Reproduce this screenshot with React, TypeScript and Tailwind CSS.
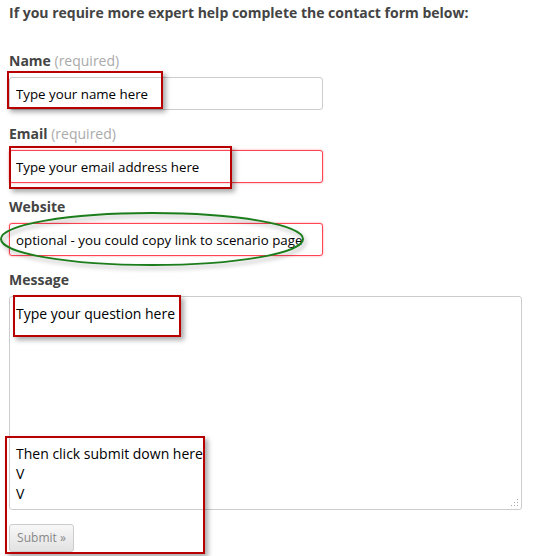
import React from "react";

const fieldBase =
  "block w-[314px] h-[33px] rounded-[3px] border bg-white px-[6px] text-[13.3px] text-black outline-none";

const Label = ({ text, required }: { text: string; required?: boolean }) => (
  <div className="text-[14px] leading-5 font-bold text-[#444]">
    {text}
    {required && <span className="font-normal text-[#aaa]"> (required)</span>}
  </div>
);

const Box = ({ className }: { className: string }) => (
  <div
    className={`absolute border-2 border-[#b80000] shadow-[3px_3px_5px_rgba(0,0,0,0.35)] pointer-events-none ${className}`}
  />
);

export default function App() {
  const message =
    "Type your question here\n\n\n\n\n\n\nThen click submit down here\nV\nV";

  return (
    <div
      className="relative w-[536px] h-[556px] bg-white pl-[9px] pt-[3px]"
      style={{ fontFamily: '"Open Sans", "Liberation Sans", sans-serif' }}
    >
      <p className="text-[14px] leading-5 font-bold text-[#444]">
        If you require more expert help complete the contact form below:
      </p>

      <div className="mt-[28px]">
        <Label text="Name" required />
        <input
          readOnly
          value="Type your name here"
          className={`${fieldBase} mt-[6px] border-[#ccc]`}
        />
      </div>

      <div className="mt-[14px]">
        <Label text="Email" required />
        <input
          readOnly
          value="Type your email address here"
          className={`${fieldBase} mt-[6px] border-[#f45] shadow-[0_0_2px_rgba(255,60,60,0.6)]`}
        />
      </div>

      <div className="mt-[14px]">
        <Label text="Website" />
        <input
          readOnly
          value="optional - you could copy link to scenario page"
          className={`${fieldBase} mt-[6px] border-[#f45] shadow-[0_0_2px_rgba(255,60,60,0.6)]`}
        />
      </div>

      <div className="mt-[14px]">
        <Label text="Message" />
        <div className="relative mt-[6px] w-[513px] h-[214px]">
          <textarea
            readOnly
            value={message}
            className="block w-full h-full resize-none rounded-[3px] border border-[#ccc] bg-white px-[6px] pt-[7px] text-[14px] leading-5 text-black outline-none"
          />
          <svg
            className="absolute right-[3px] bottom-[3px]"
            width="8"
            height="8"
            viewBox="0 0 8 8"
          >
            <rect x="6" y="0" width="1" height="1" fill="#aaa" />
            <rect x="6" y="3" width="1" height="1" fill="#aaa" />
            <rect x="3" y="3" width="1" height="1" fill="#aaa" />
            <rect x="6" y="6" width="1" height="1" fill="#aaa" />
            <rect x="3" y="6" width="1" height="1" fill="#aaa" />
            <rect x="0" y="6" width="1" height="1" fill="#aaa" />
          </svg>
        </div>
      </div>

      <button className="mt-[14px] h-[28px] w-[65px] rounded-[3px] border border-[#ccc] bg-gradient-to-b from-[#f8f8f8] to-[#e2e2e2] text-[12px] text-[#888]">
        Submit »
      </button>

      <Box className="left-[7px] top-[71px] w-[156px] h-[38px]" />
      <Box className="left-[9px] top-[146px] w-[223px] h-[43px]" />
      <Box className="left-[13px] top-[295px] w-[168px] h-[42px]" />
      <Box className="left-[5px] top-[436px] w-[200px] h-[118px]" />

      <svg
        className="absolute left-0 top-[208px] pointer-events-none"
        width="320"
        height="66"
        viewBox="0 0 320 66"
      >
        <defs>
          <filter id="sh" x="-10%" y="-30%" width="120%" height="160%">
            <feDropShadow dx="2" dy="3" stdDeviation="2" floodColor="#000" floodOpacity="0.3" />
          </filter>
        </defs>
        <ellipse
          cx="152"
          cy="31"
          rx="151"
          ry="26"
          fill="none"
          stroke="#1e7d1e"
          strokeWidth="2"
          filter="url(#sh)"
        />
      </svg>
    </div>
  );
}
